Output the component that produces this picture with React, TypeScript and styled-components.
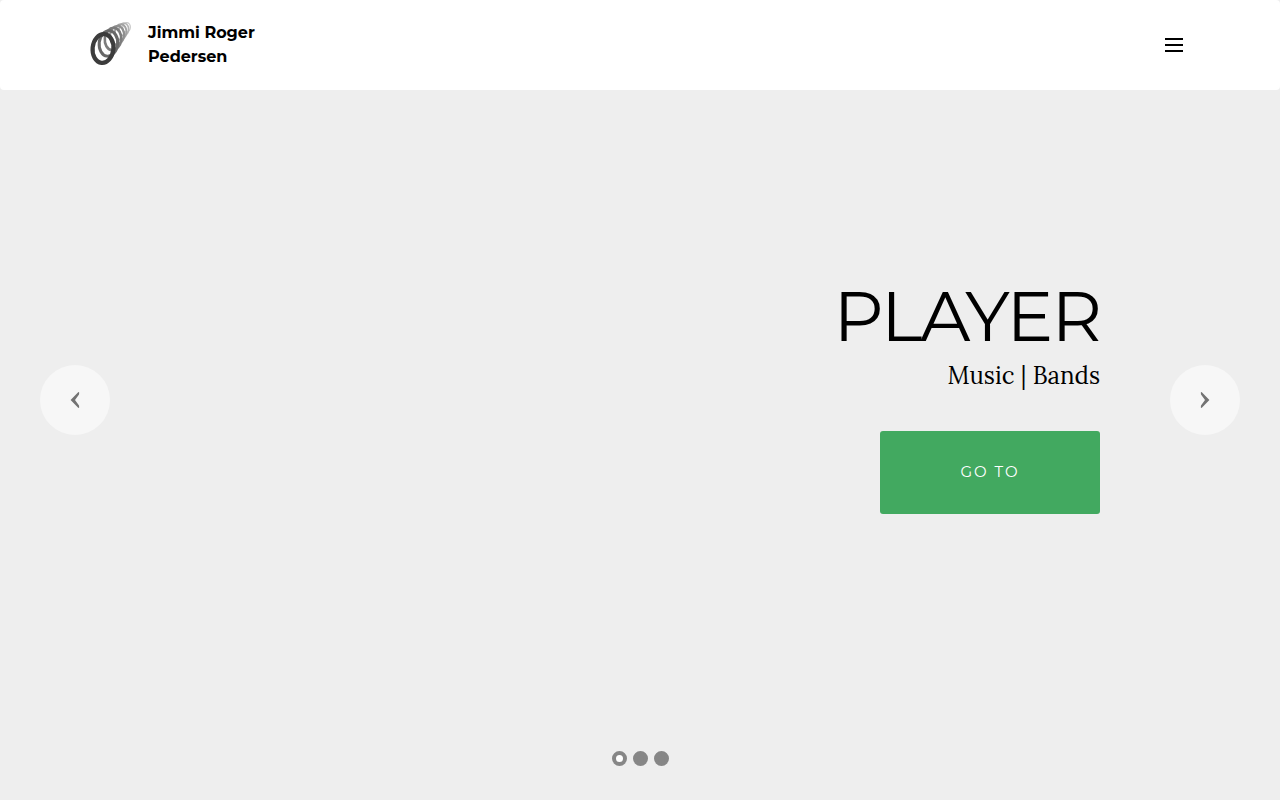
import React, { useState } from "react";
import styled, { createGlobalStyle } from "styled-components";

const sans = `Montserrat, Inter, "Open Sans", sans-serif`;
const serif = `Lora, "Liberation Serif", serif`;

const GlobalStyle = createGlobalStyle`
  *, *::before, *::after { box-sizing: border-box; }
  body {
    margin: 0;
    background: #eeeeee;
    color: #000;
    font-family: ${sans};
  }
`;

const Header = styled.header`
  position: fixed;
  inset: 0 0 auto;
  z-index: 2;
  display: flex;
  align-items: center;
  justify-content: space-between;
  min-height: 90px;
  padding: 0 88px;
  background: #fff;
  border-radius: 4px;
`;

const Brand = styled.a`
  display: flex;
  align-items: center;
  gap: 14px;
  color: inherit;
  text-decoration: none;
`;

const BrandName = styled.span`
  width: 128px;
  font-size: 16px;
  font-weight: 700;
  line-height: 24px;
`;

const MenuButton = styled.button`
  display: flex;
  flex-direction: column;
  gap: 4px;
  padding: 9px;
  border: 0;
  background: none;
  cursor: pointer;
`;

const MenuBar = styled.span`
  width: 18px;
  height: 2px;
  background: #000;
`;

const Hero = styled.section`
  position: relative;
  display: flex;
  align-items: center;
  min-height: 100vh;
  padding: 0 180px 6px;
`;

const Slide = styled.div`
  display: flex;
  flex-direction: column;
  align-items: flex-end;
  flex: 1;
  text-align: right;
`;

const Title = styled.h1`
  margin: 0 0 6px;
  font-size: 70px;
  font-weight: 400;
  line-height: 72px;
  letter-spacing: -2px;
`;

const Subtitle = styled.p`
  margin: 0 0 37px;
  font-family: ${serif};
  font-size: 24px;
  line-height: 36px;
`;

const Action = styled.a`
  min-width: 220px;
  padding: 29px 79px 30px;
  border-radius: 3px;
  background: #42a960;
  color: #fff;
  font-size: 15px;
  line-height: 24px;
  letter-spacing: 2px;
  text-align: center;
  text-decoration: none;
`;

const Arrow = styled.button<{ $side: "left" | "right" }>`
  position: absolute;
  top: 50%;
  ${({ $side }) => $side}: 40px;
  display: grid;
  place-items: center;
  width: 70px;
  height: 70px;
  margin-top: -35px;
  padding: 0;
  border: 0;
  border-radius: 50%;
  background: #f7f7f7;
  color: #737373;
  cursor: pointer;
`;

const Dots = styled.div`
  position: absolute;
  inset: auto 0 34px;
  display: flex;
  justify-content: center;
  gap: 6px;
`;

const Dot = styled.button<{ $active: boolean }>`
  width: 15px;
  height: 15px;
  padding: 0;
  border: 4px solid #868686;
  border-radius: 50%;
  background: ${({ $active }) => ($active ? "#fff" : "#868686")};
  cursor: pointer;
`;

const rings = [
  { x: 38.5, y: 7.4, rx: 3.8, ry: 4.8, w: 1.3, c: "#c8c8c8" },
  { x: 35.8, y: 9.4, rx: 4.8, ry: 6.2, w: 1.7, c: "#b4b4b4" },
  { x: 32.6, y: 12, rx: 5.8, ry: 7.8, w: 2, c: "#a2a2a2" },
  { x: 29, y: 15.2, rx: 7, ry: 9.4, w: 2.3, c: "#909090" },
  { x: 25, y: 19, rx: 8.2, ry: 11.2, w: 2.6, c: "#7c7c7c" },
  { x: 20.4, y: 23.4, rx: 9.2, ry: 12.8, w: 3, c: "#686868" },
  { x: 15, y: 28.5, rx: 10.4, ry: 14.4, w: 4.2, c: "#3c3c3c" },
];

const Logo = () => (
  <svg width="46" height="50" viewBox="0 0 46 50" fill="none" aria-hidden="true">
    {rings.map((r) => (
      <ellipse
        key={r.x}
        cx={r.x}
        cy={r.y}
        rx={r.rx}
        ry={r.ry}
        stroke={r.c}
        strokeWidth={r.w}
        transform={`rotate(6 ${r.x} ${r.y})`}
      />
    ))}
  </svg>
);

const slides = ["Player", "Second slide", "Third slide"];

export default function App() {
  const [current, setCurrent] = useState(0);
  const move = (step: number) =>
    setCurrent((current + step + slides.length) % slides.length);

  return (
    <>
      <GlobalStyle />
      <Header>
        <Brand href="#">
          <Logo />
          <BrandName>Jimmi Roger Pedersen</BrandName>
        </Brand>
        <MenuButton aria-label="Open menu">
          <MenuBar />
          <MenuBar />
          <MenuBar />
        </MenuButton>
      </Header>
      <Hero>
        <Slide>
          <Title>PLAYER</Title>
          <Subtitle>Music | Bands</Subtitle>
          <Action href="#player">GO TO</Action>
        </Slide>
        <Arrow $side="left" aria-label="Previous" onClick={() => move(-1)}>
          <svg width="10" height="18" viewBox="0 0 10 18" fill="currentColor">
            <path d="M8.4 1 9.2 1.6 9 3.6 5 9 9 14.6 9.2 16.4 8.4 17 .6 9Z" />
          </svg>
        </Arrow>
        <Arrow $side="right" aria-label="Next" onClick={() => move(1)}>
          <svg width="10" height="18" viewBox="0 0 10 18" fill="currentColor">
            <path d="M1.6 1 .8 1.6 1 3.6 5 9 1 14.6 .8 16.4 1.6 17 9.4 9Z" />
          </svg>
        </Arrow>
        <Dots>
          {slides.map((name, i) => (
            <Dot
              key={name}
              $active={i === current}
              aria-label={name}
              onClick={() => setCurrent(i)}
            />
          ))}
        </Dots>
      </Hero>
    </>
  );
}
